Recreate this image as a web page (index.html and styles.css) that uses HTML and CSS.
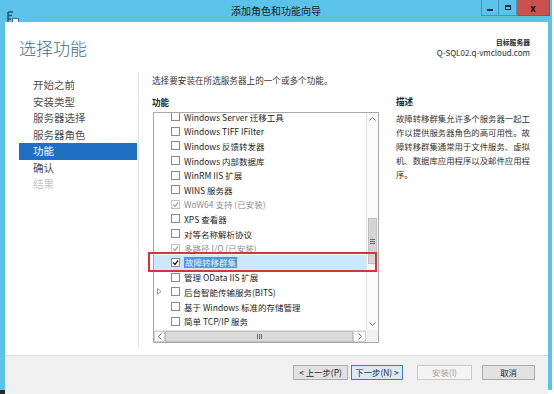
FILE: index.html
```html
<!DOCTYPE html>
<html lang="zh-CN">
  <head>
    <meta charset="UTF-8" />
    <title>添加角色和功能向导</title>
    <link rel="stylesheet" href="styles.css">
  </head>
  <body>
    <div class="window">
      <div class="title-bar">
        <div class="app-icon">
          <svg width="13" height="13" viewBox="0 0 13 13">
            <path d="M2 1h5M2 1v10M2 4.5h4M2 8h3" stroke="#2d4f6a" stroke-width="1.4" fill="none" />
            <rect x="6.5" y="7.5" width="6" height="4.5" fill="#fff" stroke="#3a6f96" />
          </svg>
        </div>
        <div class="title">添加角色和功能向导</div>
        <div class="controls">
          <span class="ctl min"><i></i></span>
          <span class="ctl max"><i></i></span>
          <span class="ctl close">x</span>
        </div>
      </div>

      <div class="client">
        <div class="header">
          <h1>选择功能</h1>
          <div class="target">
            <div class="target-label">目标服务器</div>
            <div class="target-name">Q-SQL02.q-vmcloud.com</div>
          </div>
        </div>

        <div class="body">
          <ul class="steps">
            <li>开始之前</li>
            <li>安装类型</li>
            <li>服务器选择</li>
            <li>服务器角色</li>
            <li class="current">功能</li>
            <li>确认</li>
            <li class="off">结果</li>
          </ul>

          <div class="main">
            <p class="intro">选择要安装在所选服务器上的一个或多个功能。</p>
            <div class="label">功能</div>
            <div class="listbox">
              <div class="viewport">
                <ul class="features">
                  <li><span class="exp"></span><span class="cb"></span>Windows Server 迁移工具</li>
                  <li><span class="exp"></span><span class="cb"></span>Windows TIFF IFilter</li>
                  <li><span class="exp"></span><span class="cb"></span>Windows 反馈转发器</li>
                  <li><span class="exp"></span><span class="cb"></span>Windows 内部数据库</li>
                  <li><span class="exp"></span><span class="cb"></span>WinRM IIS 扩展</li>
                  <li><span class="exp"></span><span class="cb"></span>WINS 服务器</li>
                  <li class="installed"><span class="exp"></span><span class="cb checked"><svg width="7" height="7" viewBox="0 0 7 7"><path d="M1 3.5L3 5.5L6 1.5" /></svg></span>WoW64 支持 (已安装)</li>
                  <li><span class="exp"></span><span class="cb"></span>XPS 查看器</li>
                  <li><span class="exp"></span><span class="cb"></span>对等名称解析协议</li>
                  <li class="installed"><span class="exp"></span><span class="cb checked"><svg width="7" height="7" viewBox="0 0 7 7"><path d="M1 3.5L3 5.5L6 1.5" /></svg></span>多路径 I/O (已安装)</li>
                  <li class="selected"><span class="exp"></span><span class="cb checked"><svg width="7" height="7" viewBox="0 0 7 7"><path d="M1 3.5L3 5.5L6 1.5" /></svg></span><span class="hl">故障转移群集</span></li>
                  <li><span class="exp"></span><span class="cb"></span>管理 OData IIS 扩展</li>
                  <li><span class="exp">
                    <svg width="5" height="7" viewBox="0 0 5 7"><path d="M0.5 0.5L4 3.5L0.5 6.5Z" fill="none" stroke="#8a8a8a" stroke-width="0.9" /></svg>
                  </span><span class="cb"></span>后台智能传输服务(BITS)</li>
                  <li><span class="exp"></span><span class="cb"></span>基于 Windows 标准的存储管理</li>
                  <li><span class="exp"></span><span class="cb"></span>简单 TCP/IP 服务</li>
                </ul>
              </div>
              <div class="vscroll">
                <div class="arrow">
                  <svg width="7" height="4" viewBox="0 0 7 4"><path d="M0.5 3.5L3.5 0.5L6.5 3.5" /></svg>
                </div>
                <div class="vthumb">
                  <svg width="5" height="5" viewBox="0 0 5 5"><path d="M0 0.5h5M0 2.5h5M0 4.5h5" /></svg>
                </div>
                <div class="arrow down">
                  <svg width="7" height="4" viewBox="0 0 7 4"><path d="M0.5 0.5L3.5 3.5L6.5 0.5" /></svg>
                </div>
              </div>
              <div class="hscroll">
                <div class="harrow left">
                  <svg width="4" height="7" viewBox="0 0 4 7"><path d="M3.5 0.5L0.5 3.5L3.5 6.5" /></svg>
                </div>
                <div class="hthumb">
                  <svg width="5" height="5" viewBox="0 0 5 5"><path d="M0.5 0v5M2.5 0v5M4.5 0v5" /></svg>
                </div>
                <div class="harrow right">
                  <svg width="4" height="7" viewBox="0 0 4 7"><path d="M0.5 0.5L3.5 3.5L0.5 6.5" /></svg>
                </div>
              </div>
              <div class="corner"></div>
              <div class="mark"></div>
            </div>
          </div>

          <div class="desc">
            <div class="label">描述</div>
            <p>故障转移群集允许多个服务器一起工作以提供服务器角色的高可用性。故障转移群集通常用于文件服务、虚拟机、数据库应用程序以及邮件应用程序。</p>
          </div>
        </div>

        <div class="footer">
          <button class="btn prev">&lt; 上一步(P)</button>
          <button class="btn next">下一步(N) &gt;</button>
          <button class="btn install" disabled>安装(I)</button>
          <button class="btn cancel">取消</button>
        </div>
      </div>
    </div>
    <div class="under"></div>
  </body>
</html>
```

FILE: styles.css
```css
body {
  margin: 0;
  width: 554px;
  height: 394px;
  overflow: hidden;
  background-color: white;
  color: #1e1e1e;
  font-family: "Noto Sans CJK SC", sans-serif;
}

.window {
  width: 552px;
  height: 390px;
  display: flex;
  flex-direction: column;
  background-color: #5bc3ea;
}

.under {
  width: 8px;
  height: 4px;
  background-color: #2a2a2a;
}

/* title bar */
.title-bar {
  height: 22px;
  display: grid;
  grid-template-columns: 1fr auto 1fr;
}

.app-icon {
  padding: 5px 0 0 6px;
}

.title {
  font-size: 10px;
  line-height: 22px;
  color: #1a1a1a;
}

.controls {
  justify-self: end;
  display: flex;
  margin-right: 2px;
  height: 16px;
}

.ctl {
  width: 18px;
  height: 16px;
  box-sizing: border-box;
  border: 1px solid #3b97c6;
  border-top: none;
  display: flex;
  align-items: center;
  justify-content: center;
}

.ctl + .ctl {
  border-left: none;
}

.min i {
  width: 6px;
  height: 2px;
  margin-top: 5px;
  background-color: #1b2d4a;
}

.max i {
  width: 6px;
  height: 5px;
  box-sizing: border-box;
  border: 1px solid #1b2d4a;
  border-top-width: 2px;
}

.close {
  width: 33px;
  background-color: #c8514c;
  border-color: #b04440;
  color: #2a0e0e;
  font-size: 10px;
  font-weight: bold;
  line-height: 14px;
}

/* client area */
.client {
  flex: 1;
  margin: 0 4px 5px 5px;
  background-color: white;
  display: flex;
  flex-direction: column;
}

.header {
  height: 50px;
  display: flex;
  justify-content: space-between;
  padding: 0 18px 0 14px;
}

.header h1 {
  margin: 16px 0 0;
  font-size: 17px;
  line-height: 20px;
  font-weight: 300;
  color: #3f6f8d;
}

.target {
  margin-top: 15px;
  text-align: right;
  color: #2a2a2a;
}

.target-label {
  font-size: 6.8px;
  line-height: 10px;
  font-weight: bold;
}

.target-name {
  font-size: 8px;
  line-height: 11px;
}

.body {
  height: 283px;
  display: flex;
}

.steps {
  list-style: none;
  margin: 0 0 6px;
  width: 134px;
  box-sizing: border-box;
  padding: 5px 1px 0 14px;
  border-right: 1px solid #e2e2e2;
}

.steps li {
  height: 16.5px;
  line-height: 16.5px;
  padding-left: 14px;
  font-size: 10.5px;
  color: #4d4d4d;
}

.steps li.current {
  background-color: #1f6fc5;
  color: white;
}

.steps li.off {
  color: #c3c3c3;
}

.main {
  width: 257px;
  box-sizing: border-box;
  padding-left: 13px;
}

.intro {
  margin: 2px 0 0;
  font-size: 8.6px;
  line-height: 12px;
  color: #333;
}

.label {
  font-size: 8.6px;
  line-height: 12px;
  font-weight: bold;
  color: #222;
}

.main .label {
  margin-top: 10px;
}

/* feature list */
.listbox {
  position: relative;
  margin: 4px 0 0 1px;
  width: 226px;
  height: 231px;
  box-sizing: border-box;
  border: 1px solid #a9a9a9;
  display: grid;
  grid-template-columns: 212px 12px;
  grid-template-rows: 217px 12px;
}

.viewport {
  overflow: hidden;
}

.features {
  list-style: none;
  margin: -3.5px 0 0;
  padding: 0;
}

.features li {
  height: 14.6px;
  display: flex;
  align-items: center;
  font-size: 8.5px;
  white-space: nowrap;
  color: #1e1e1e;
}

.exp {
  width: 17px;
  box-sizing: border-box;
  padding-left: 3px;
  display: flex;
  align-items: center;
}

.cb {
  width: 9px;
  height: 9px;
  box-sizing: border-box;
  border: 1px solid #8a8a8a;
  background-color: white;
  margin-right: 4px;
  display: flex;
  align-items: center;
  justify-content: center;
}

.cb svg path {
  fill: none;
  stroke: #222;
  stroke-width: 1.3;
}

.installed {
  color: #8c8c8c !important;
}

.installed .cb {
  border-color: #c4c4c4;
}

.installed .cb svg path {
  stroke: #a8a8a8;
}

.features li.selected {
  background-color: #cce8ff;
}

.hl {
  background-color: #4c96e0;
  color: #eef5fd;
  padding: 0 1px;
  line-height: 11px;
}

.mark {
  position: absolute;
  left: -6px;
  top: 139px;
  width: 229px;
  height: 20px;
  box-sizing: border-box;
  border: 2px solid #d6343b;
}

/* scroll bars */
.vscroll {
  display: flex;
  flex-direction: column;
  background-color: #fafafa;
  border-left: 1px solid #e3e3e3;
}

.arrow {
  height: 12px;
  display: flex;
  align-items: center;
  justify-content: center;
}

.arrow.down {
  margin-top: auto;
}

.vscroll svg path,
.hscroll svg path {
  fill: none;
  stroke: #6a6a6a;
  stroke-width: 1;
}

.vthumb {
  margin: 93px 1px 0;
  height: 44px;
  background-color: #d4d4d4;
  border: 1px solid #bfbfbf;
  display: flex;
  align-items: center;
  justify-content: center;
}

.hscroll {
  display: flex;
  background-color: #fafafa;
  border-top: 1px solid #e3e3e3;
}

.harrow {
  display: flex;
  align-items: center;
  justify-content: center;
  box-sizing: border-box;
  border: 1px solid #d0d0d0;
  background-color: white;
}

.harrow.left {
  width: 11px;
}

.harrow.right {
  width: 13px;
}

.hthumb {
  flex: 1;
  background-color: #dadada;
  border: 1px solid #bdbdbd;
  display: flex;
  align-items: center;
  justify-content: center;
}

.corner {
  background-color: #f0f0f0;
}

/* description */
.desc {
  width: 152px;
}

.desc .label {
  margin-top: 23px;
}

.desc p {
  margin: 4px 0 0;
  width: 136px;
  font-size: 8.4px;
  line-height: 14px;
  color: #333;
}

/* footer */
.footer {
  height: 29px;
  border-top: 1px solid #dcdcdc;
  background-color: #f0f0f0;
  display: flex;
  justify-content: flex-end;
  align-items: flex-start;
  padding: 9px 13px 0 0;
  box-sizing: content-box;
}

.btn {
  height: 15px;
  padding: 0;
  box-sizing: border-box;
  border: 1px solid #acacac;
  background-color: #e1e1e1;
  color: #1e1e1e;
  font-family: "Noto Sans CJK SC", sans-serif;
  font-size: 8.4px;
  line-height: 13px;
  text-align: center;
}

.prev {
  width: 55px;
}

.next {
  width: 52px;
  margin-left: 3px;
  background-color: #dbe9f6;
  border-color: #3c7fb1;
}

.install {
  width: 55px;
  margin-left: 14px;
  background-color: #f4f4f4;
  border-color: #cacaca;
  color: #a0a0a0;
}

.cancel {
  width: 53px;
  margin-left: 10px;
}
```
